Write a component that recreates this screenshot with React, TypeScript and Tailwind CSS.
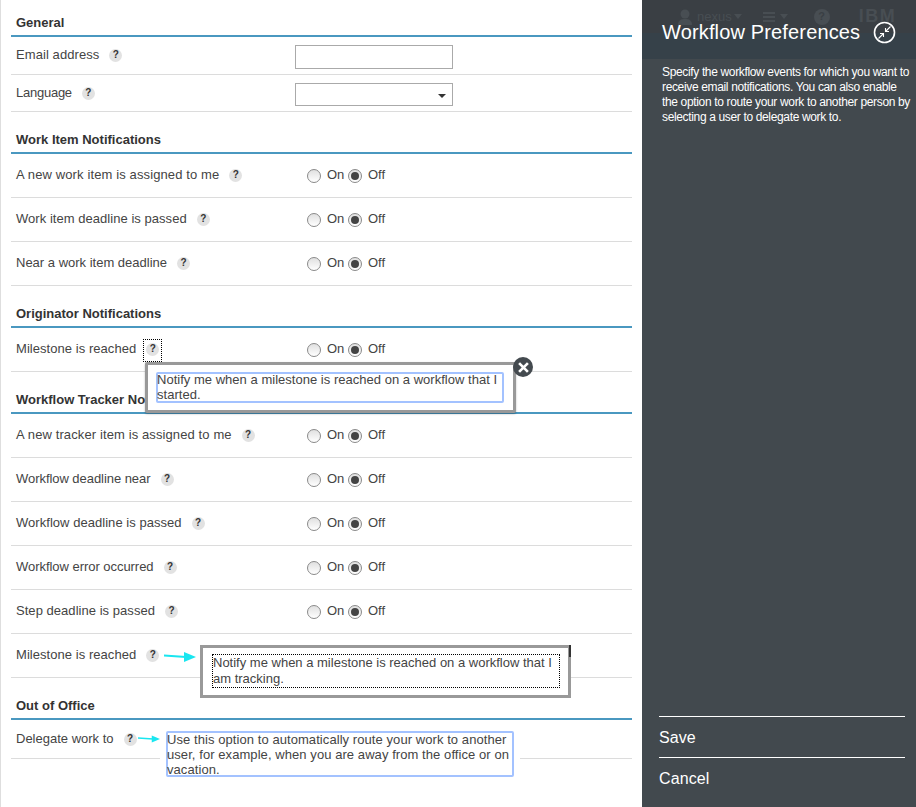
import React from 'react'

const HelpBadge = () => (
  <span className="inline-flex h-[13px] w-[13px] shrink-0 items-center justify-center rounded-full bg-[#e2e2e2] text-[10px] font-bold leading-none text-[#333]">
    ?
  </span>
)

const Radio = ({ checked = false }: { checked?: boolean }) => (
  <span className="flex h-[14px] w-[14px] shrink-0 items-center justify-center rounded-full border border-[#8a8a8a] bg-gradient-to-b from-[#e0e0e0] to-white">
    {checked && <span className="h-[8px] w-[8px] rounded-full bg-[#444]" />}
  </span>
)

const OnOff = () => (
  <div className="absolute left-[296px] top-[14px] flex items-start">
    <span className="mt-[1px]"><Radio /></span>
    <span className="ml-[6px] -mt-[3px] w-[21px]">On</span>
    <span className="mt-[1px]"><Radio checked /></span>
    <span className="ml-[6px] -mt-[3px]">Off</span>
  </div>
)

const Row = ({ label, labelClass = '', height = 'h-[44px]', top = 'mt-[12px]', children }: { label: string; labelClass?: string; height?: string; top?: string; children?: React.ReactNode }) => (
  <div className={`relative flex ${height} border-b border-[#dcdcdc] pl-[5px]`}>
    <div className={`${top} flex h-[18px] items-center gap-[10px]`}>
      <span className={labelClass}>{label}</span>
      <HelpBadge />
    </div>
    {children ?? <OnOff />}
  </div>
)

const Heading = ({ title }: { title: string }) => (
  <div className="flex h-[42px] items-end border-b-2 border-[#4a98c0] pb-[3px] pl-[5px] font-bold text-[#333]">
    {title}
  </div>
)

const Arrow = ({ className }: { className: string }) => (
  <svg className={className} viewBox="0 0 32 10" fill="none">
    <path d="M0 3.5 L22 5" stroke="#19e6f0" strokeWidth="2" />
    <path d="M20 0 L32 5 L20 10 Z" fill="#19e6f0" />
  </svg>
)

export default function App() {
  return (
    <div className="relative flex h-[807px] w-[916px] overflow-hidden bg-white font-['Liberation_Sans',Arial,sans-serif] text-[13px] text-[#444]">
      <div className="w-[642px] shrink-0 border-l border-[#dedede] pl-[10px] pr-[10px]">
        <div className="flex h-[37px] items-end border-b-2 border-[#4a98c0] pb-[3px] pl-[5px] font-bold text-[#333]">General</div>
        <Row label="Email address" labelClass="tracking-[0.08px]" height="h-[38px]" top="mt-[9px]">
          <div className="absolute left-[284px] top-[8px] h-[24px] w-[158px] border border-[#aaa]" />
        </Row>
        <Row label="Language" labelClass="tracking-[-0.25px]" height="h-[37px]" top="mt-[9px]">
          <div className="absolute left-[284px] top-[8px] flex h-[23px] w-[158px] items-center justify-end border border-[#aaa] pr-[6px]">
            <span className="mt-[3px] border-x-[4px] border-t-[4px] border-x-transparent border-t-[#333]" />
          </div>
        </Row>

        <Heading title="Work Item Notifications" />
        <Row label="A new work item is assigned to me" labelClass="tracking-[0.12px]" />
        <Row label="Work item deadline is passed" labelClass="tracking-[0.04px]" />
        <Row label="Near a work item deadline" />

        <Heading title="Originator Notifications" />
        <Row label="Milestone is reached" labelClass="tracking-[0.05px]" />

        <Heading title="Workflow Tracker Notifications" />
        <Row label="A new tracker item is assigned to me" labelClass="tracking-[0.11px]" />
        <Row label="Workflow deadline near" labelClass="tracking-[-0.05px]" />
        <Row label="Workflow deadline is passed" labelClass="tracking-[0.04px]" />
        <Row label="Workflow error occurred" labelClass="tracking-[-0.04px]" />
        <Row label="Step deadline is passed" labelClass="tracking-[0.04px]" />
        {/* the on/off pair of this row sits behind the tooltip */}
        <Row label="Milestone is reached" labelClass="tracking-[0.05px]"><span /></Row>

        <Heading title="Out of Office" />
        <Row label="Delegate work to" height="h-[39px]" top="mt-[10px]"><span /></Row>
      </div>

      <aside className="flex flex-1 flex-col bg-[#42494e] text-white">
        <div className="relative h-[59px] bg-[#364149]">
          <div className="flex h-[33px] items-center bg-[#3a3f44] pl-[36px] text-[#484e53]">
            <svg className="h-[16px] w-[14px]" viewBox="0 0 14 16" fill="currentColor">
              <circle cx="7" cy="5" r="4.5" />
              <path d="M0 16 C0 11 3 10 7 10 C11 10 14 11 14 16 Z" />
            </svg>
            <span className="ml-[5px] text-[13px]">nexus</span>
            <span className="ml-[2px] border-x-[4px] border-t-[5px] border-x-transparent border-t-[#484e53]" />
            <div className="ml-[21px] flex w-[12px] flex-col gap-[2px]">
              <span className="h-[2px] bg-[#484e53]" />
              <span className="h-[2px] bg-[#484e53]" />
              <span className="h-[2px] bg-[#484e53]" />
            </div>
            <span className="ml-[5px] border-x-[4px] border-t-[5px] border-x-transparent border-t-[#484e53]" />
            <span className="ml-[26px] flex h-[16px] w-[16px] items-center justify-center rounded-full bg-[#484e53] text-[11px] font-bold text-[#3a3f44]">?</span>
            <span className="ml-[29px] text-[18px] font-bold tracking-[1.5px]">IBM</span>
          </div>
          <div className="absolute left-[20px] top-[18px] flex items-center">
            <h1 className="text-[20px] leading-[28px] tracking-[0.15px] text-white">Workflow Preferences</h1>
            <svg className="ml-[13px] h-[23px] w-[23px]" viewBox="0 0 23 23" fill="none" stroke="white" strokeWidth="1.6">
              <circle cx="11.5" cy="11.5" r="10" />
              <path d="M17.5 5.5 L12.5 10.5 M12.5 7 V10.5 H16 M5.5 17.5 L10.5 12.5 M7 12.5 H10.5 V16" strokeWidth="1.1" />
            </svg>
          </div>
        </div>
        <p className="ml-[20px] mr-[2px] mt-[6px] text-[12px] leading-[15px] tracking-[-0.35px]">
          Specify the workflow events for which you want to receive email notifications. You can also enable the option to route your work to another person by selecting a user to delegate work to.
        </p>
        <div className="mb-[9px] ml-[17px] mr-[11px] mt-auto text-[16px] tracking-[0.1px]">
          <div className="flex h-[41px] items-center border-t border-white pt-[2px]">Save</div>
          <div className="flex h-[41px] items-center border-t border-white pt-[2px]">Cancel</div>
        </div>
      </aside>

      <div className="absolute left-[143px] top-[339px] h-[23px] w-[19px] border border-dotted border-black" />
      <div className="absolute left-[145px] top-[362px] h-[51px] w-[371px] rounded-[2px] border-[3px] border-[#999] bg-white pl-[8px] pt-[7px] shadow-[0_1px_2px_rgba(0,0,0,0.3)]">
        <div className="h-[31px] w-[348px] rounded-[2px] border-2 border-[#a3c2ff] leading-[15px]">
          <p className="-ml-[1px] -mt-[2px] tracking-[0.02px]">Notify me when a milestone is reached on a workflow that I started.</p>
        </div>
      </div>
      <div className="absolute left-[513px] top-[357px] flex h-[20px] w-[20px] items-center justify-center rounded-full bg-[#444a4f]">
        <svg className="h-[11px] w-[11px]" viewBox="0 0 10 10" stroke="white" strokeWidth="2.4">
          <path d="M1 1 L9 9 M9 1 L1 9" />
        </svg>
      </div>

      <Arrow className="absolute left-[164px] top-[652px] h-[10px] w-[32px]" />
      <div className="absolute left-[200px] top-[645px] h-[53px] w-[371px] border-[3px] border-[#999] bg-white pl-[9px] pt-[6px]">
        <div className="h-[34px] w-[348px] border border-dotted border-black leading-[16px]">
          Notify me when a milestone is reached on a workflow that I am tracking.
        </div>
        <span className="absolute -right-[3px] -top-[3px] h-[12px] w-[2px] bg-[#333]" />
      </div>

      <Arrow className="absolute left-[138px] top-[734px] h-[10px] w-[22px]" />
      <div className="absolute left-[160px] top-[731px] bg-white px-[6px]">
        <div className="h-[46px] w-[348px] rounded-[2px] border-2 border-[#a3c2ff] bg-white leading-[15px]">
          <p className="-ml-[1px] -mt-[1px] tracking-[0.07px]">Use this option to automatically route your work to another user, for example, when you are away from the office or on vacation.</p>
        </div>
      </div>
    </div>
  )
}
